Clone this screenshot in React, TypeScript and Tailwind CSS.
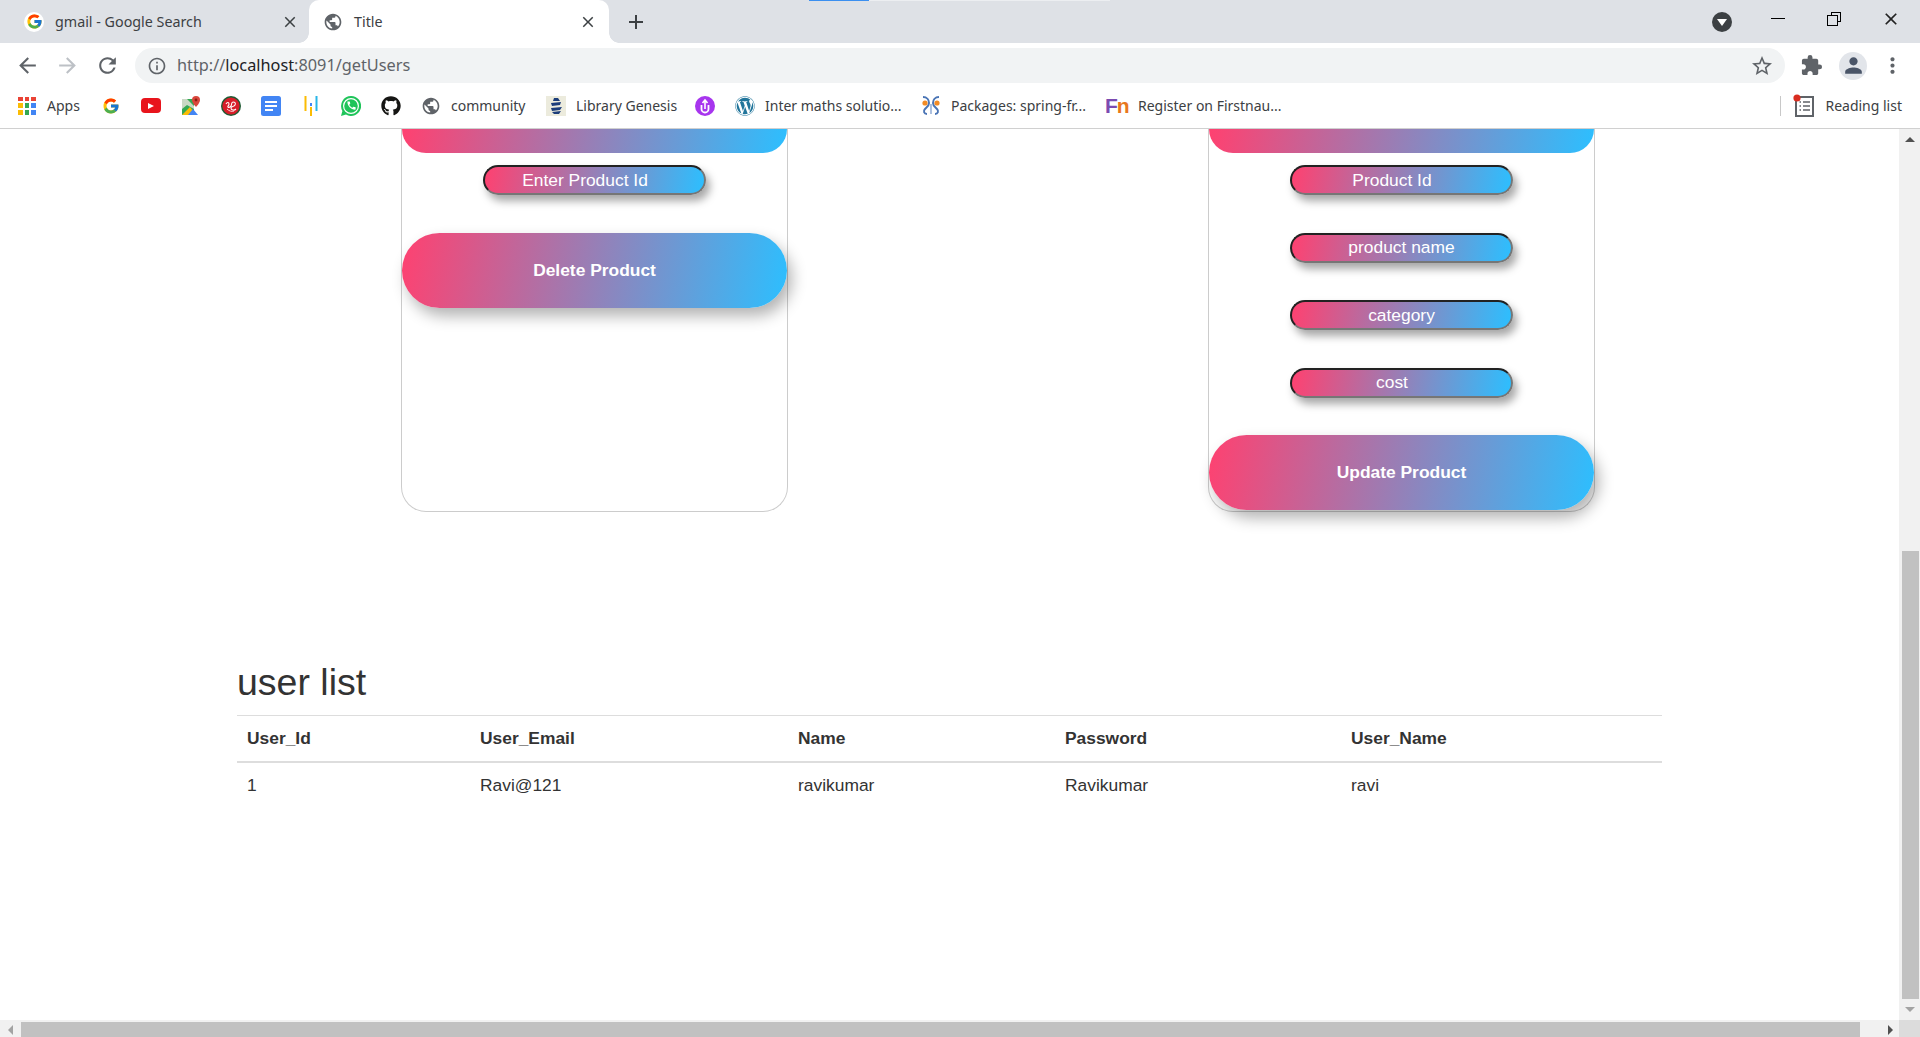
import { FcGoogle } from "react-icons/fc";
import { FaGithub, FaWordpress } from "react-icons/fa";
import {
	MdAdd,
	MdArrowBack,
	MdArrowForward,
	MdCall,
	MdClose,
	MdExtension,
	MdInfoOutline,
	MdMoreVert,
	MdPerson,
	MdPublic,
	MdRefresh,
	MdStarBorder,
} from "react-icons/md";
import type { ReactNode } from "react";

const gradient = "bg-[linear-gradient(100deg,#ff4170,#2cbfff)]";
const chromeFont = "font-['Noto_Sans',sans-serif]";

const tableHeads = [
	{ label: "User_Id", width: "w-[233px]", value: "1" },
	{ label: "User_Email", width: "w-[318px]", value: "Ravi@121" },
	{ label: "Name", width: "w-[267px]", value: "ravikumar" },
	{ label: "Password", width: "w-[286px]", value: "Ravikumar" },
	{ label: "User_Name", width: "w-[321px]", value: "ravi" },
];

function AppsIcon() {
	const colors = ["#ea4335", "#ea4335", "#ea4335", "#fbbc04", "#34a853", "#4285f4", "#fbbc04", "#34a853", "#4285f4"];
	return (
		<div className="grid h-5 w-5 grid-cols-3 gap-[2px] p-[1px]">
			{colors.map((color, i) => (
				<span key={i} style={{ backgroundColor: color }} />
			))}
		</div>
	);
}

function MapsIcon() {
	return (
		<svg viewBox="0 0 20 20" className="h-5 w-5">
			<path d="M1 3 13 3v16H1z" fill="#34a853" />
			<path d="M1 3 6 3 13 10v3L6 9 1 13z" fill="#c9d8c4" />
			<path d="M1 19 9 11l6 8z" fill="#fbbc04" />
			<path d="M7 19 12 13l5 6z" fill="#4285f4" />
			<path d="M15 0a4 4 0 0 1 4 4c0 3-4 7-4 7s-4-4-4-7a4 4 0 0 1 4-4z" fill="#d9473b" />
			<circle cx="15" cy="4" r="1.4" fill="#8c1c13" />
		</svg>
	);
}

function RedIcon() {
	return (
		<svg viewBox="0 0 20 20" className="h-5 w-5">
			<circle cx="10" cy="10" r="10" fill="#1f5a33" />
			<circle cx="10" cy="10" r="8.6" fill="#d81e2a" />
			<path d="M5 8c1-2 3-2 3 0s-2 2-1 3 2 0 3-1 0-4 2-4 3 1 2 3-4 1-4 3 3 3 5 1" fill="none" stroke="#fff" strokeWidth="1.1" />
			<path d="M6 13c2 2 5 3 7 2" fill="none" stroke="#fbd5d5" strokeWidth="1" />
		</svg>
	);
}

function DocsIcon() {
	return (
		<svg viewBox="0 0 20 20" className="h-5 w-5">
			<rect width="20" height="20" rx="2.5" fill="#4285f4" />
			<rect x="4" y="5" width="12" height="2" fill="#fff" />
			<rect x="4" y="9" width="12" height="2" fill="#fff" />
			<rect x="4" y="13" width="8" height="2" fill="#fff" />
		</svg>
	);
}

function BarsIcon() {
	return (
		<svg viewBox="0 0 20 20" className="h-5 w-5">
			<rect x="3.5" y="0" width="2" height="15" fill="#fbbc04" />
			<rect x="9" y="11" width="2" height="9" fill="#fbbc04" />
			<rect x="9" y="7" width="2" height="3" fill="#4285f4" />
			<rect x="14.5" y="0" width="2" height="15" fill="#29b6e8" />
		</svg>
	);
}

function WhatsappIcon() {
	return (
		<div className="relative flex h-5 w-5 items-center justify-center">
			<svg viewBox="0 0 20 20" className="absolute inset-0 h-5 w-5">
				<path d="M10 0a10 10 0 1 1-5 18.6L0 20l1.4-5A10 10 0 0 1 10 0z" fill="#1fc45a" />
				<circle cx="10" cy="10" r="7.4" fill="none" stroke="#fff" strokeWidth="1.2" />
			</svg>
			<MdCall className="relative h-[11px] w-[11px] text-white" />
		</div>
	);
}

function LibraryIcon() {
	return (
		<svg viewBox="0 0 20 20" className="h-5 w-5">
			<rect width="20" height="20" fill="#ecebdd" />
			<path d="M8 2h4l2 3H7z" fill="#1c3d7a" />
			<path d="M5 7l10-1-1 3-8 1z" fill="#1c3d7a" />
			<path d="M5 12l11-1-2 3-8 1z" fill="#1c3d7a" />
			<path d="M6 16l9-1-2 3H8z" fill="#1c3d7a" />
		</svg>
	);
}

function PurpleIcon() {
	return (
		<svg viewBox="0 0 20 20" className="h-5 w-5">
			<circle cx="10" cy="10" r="10" fill="#a735ee" />
			<path d="M6.5 9v4a3.5 3.5 0 0 0 7 0V9" fill="none" stroke="#fff" strokeWidth="1.8" />
			<path d="M10 13V5M7.5 7 10 4l2.5 3" fill="none" stroke="#fff" strokeWidth="1.6" />
		</svg>
	);
}

function SpringIcon() {
	return (
		<svg viewBox="0 0 20 20" className="h-5 w-5">
			<path d="M2 1c4 0 6 3 6 6s-2 4-4 6-1 5 2 5" fill="none" stroke="#4a74b5" strokeWidth="2" />
			<path d="M18 1c-4 0-6 3-6 6s2 4 4 6 1 5-2 5" fill="none" stroke="#4a74b5" strokeWidth="2" />
			<path d="M10 8v10" stroke="#8aa6d2" strokeWidth="1.4" />
			<circle cx="4" cy="7" r="2.6" fill="#f28b25" />
			<circle cx="16" cy="7" r="2.6" fill="#f28b25" />
		</svg>
	);
}

function FnIcon() {
	return (
		<span className="w-5 whitespace-nowrap font-['Liberation_Sans',sans-serif] text-[21px] leading-none font-bold tracking-[-1px]">
			<span className="text-[#7b4bb0]">F</span>
			<span className="text-[#e8771d]">n</span>
		</span>
	);
}

function ReadingIcon() {
	return (
		<svg viewBox="0 0 22 24" className="h-6 w-[22px]">
			<rect x="3" y="3" width="17" height="19" fill="none" stroke="#5f6368" strokeWidth="2" />
			<path d="M6.5 8h1.5M10 8h7M6.5 12h1.5M10 12h7M6.5 16h1.5M10 16h7" stroke="#5f6368" strokeWidth="1.6" />
			<circle cx="4" cy="4" r="3.6" fill="#d92d20" />
		</svg>
	);
}

function Bookmark({ icon, label, width }: { icon: ReactNode; label?: string; width?: string }) {
	return (
		<div className="flex h-6 items-center gap-[10px]">
			<div className="flex h-6 w-5 shrink-0 items-center justify-center">{icon}</div>
			{label && <span className={`${width} whitespace-nowrap`}>{label}</span>}
		</div>
	);
}

function Tab({ icon, title, active }: { icon: ReactNode; title: string; active?: boolean }) {
	return (
		<div
			className={`relative flex h-[43px] items-center rounded-t-[10px] ${
				active ? "w-[300px] bg-white pr-[12px] pl-[14px]" : "w-[309px] pr-[10px] pl-[24px]"
			}`}
		>
			<div className="flex h-5 w-5 items-center justify-center">{icon}</div>
			<span className="ml-[11px] flex-1 text-[14.3px]">{title}</span>
			<MdClose className="h-[18px] w-[18px] text-[#3c4043]" />
			{active && (
				<>
					<div className="absolute bottom-0 -left-[10px] h-[10px] w-[10px] bg-[radial-gradient(circle_at_0_0,#dee1e6_9.5px,#fff_10px)]" />
					<div className="absolute -right-[10px] bottom-0 h-[10px] w-[10px] bg-[radial-gradient(circle_at_100%_0,#dee1e6_9.5px,#fff_10px)]" />
				</>
			)}
		</div>
	);
}

function Pill({ label, shift, margin }: { label: string; shift?: boolean; margin: string }) {
	return (
		<div
			className={`${gradient} ${margin} flex h-[30px] w-[223px] items-center justify-center rounded-[15px] border-2 border-t-[#222] border-r-[#767676] border-b-[#767676] border-l-[#222] text-[17.4px] text-white shadow-[4px_6px_9px_rgba(0,0,0,0.35)] ${
				shift ? "pr-[19px]" : ""
			}`}
		>
			{label}
		</div>
	);
}

function BigButton({ label, margin }: { label: string; margin: string }) {
	return (
		<div
			className={`${gradient} ${margin} flex h-[75px] w-full items-center justify-center rounded-[38px] pb-[1px] text-[17.4px] font-bold text-white shadow-[5px_8px_15px_rgba(0,0,0,0.3)]`}
		>
			{label}
		</div>
	);
}

function Card({ children }: { children: ReactNode }) {
	return (
		<div className="flex h-[383px] w-[387px] flex-col items-center rounded-b-[25px] border-x border-b border-[#ccc]">
			<div className={`${gradient} h-[24px] w-full rounded-b-[26px]`} />
			{children}
		</div>
	);
}

export default function App() {
	return (
		<div className="relative flex h-screen flex-col overflow-hidden bg-white font-['Liberation_Sans',sans-serif] text-[#333]">
			<div className="absolute top-0 left-[809px] z-10 flex h-[1px] w-[301px]">
				<div className="w-[60px] bg-[#3b8ff0]" />
				<div className="flex-1 bg-[#eceef1]" />
			</div>

			{/* tab strip */}
			<div className={`${chromeFont} flex h-[43px] shrink-0 items-center bg-[#dee1e6] text-[#3c4043]`}>
				<Tab
					title="gmail - Google Search"
					icon={
						<div className="flex h-5 w-5 items-center justify-center rounded-full bg-white">
							<FcGoogle className="h-[17px] w-[17px]" />
						</div>
					}
				/>
				<Tab title="Title" active icon={<MdPublic className="h-[22px] w-[22px] text-[#5f6368]" />} />
				<MdAdd className="ml-[15px] h-[24px] w-[24px] text-[#3c4043]" />
				<div className="ml-auto flex h-full items-center">
					<div className="flex h-[20px] w-[20px] items-center justify-center rounded-full bg-[#3c4043]">
						<div className="mt-[2px] h-0 w-0 border-x-[5px] border-t-[7px] border-x-transparent border-t-white" />
					</div>
					<div className="ml-[39px] h-[1px] w-[14px] -translate-y-[3px] bg-black" />
					<div className="relative ml-[42px] h-[14px] w-[14px] -translate-y-[3px]">
						<div className="absolute top-0 right-0 h-[10px] w-[10px] border border-black" />
						<div className="absolute bottom-0 left-0 h-[11px] w-[11px] border border-black bg-[#dee1e6]" />
					</div>
					<MdClose className="mr-[19px] ml-[40px] h-[20px] w-[20px] -translate-y-[3px] text-[#222]" />
				</div>
			</div>

			{/* address bar */}
			<div className={`${chromeFont} flex h-[45px] shrink-0 items-start bg-white pt-[5px]`}>
				<div className="flex h-[35px] w-[135px] items-center pl-[15px] text-[#5f6368]">
					<MdArrowBack className="h-[25px] w-[25px]" />
					<MdArrowForward className="ml-[15px] h-[25px] w-[25px] text-[#bdc1c6]" />
					<MdRefresh className="ml-[15px] h-[25px] w-[25px]" />
				</div>
				<div className="flex h-[35px] w-[1650px] items-center rounded-full bg-[#f1f3f4] pl-[12px] text-[#5f6368]">
					<MdInfoOutline className="h-[20px] w-[20px]" />
					<span className="ml-[10px] text-[16.3px]">
						http://<span className="text-[#202124]">localhost</span>:8091/getUsers
					</span>
					<MdStarBorder className="mr-[11px] ml-auto h-[24px] w-[24px]" />
				</div>
				<div className="flex h-[35px] flex-1 items-center text-[#5f6368]">
					<MdExtension className="ml-[15px] h-[23px] w-[23px]" />
					<div className="ml-[16px] flex h-[28px] w-[28px] items-center justify-center rounded-full bg-[#e2e5ea]">
						<MdPerson className="h-[25px] w-[25px] text-[#4a5568]" />
					</div>
					<MdMoreVert className="ml-[13px] h-[25px] w-[25px]" />
				</div>
			</div>

			{/* bookmarks */}
			<div
				className={`${chromeFont} flex h-[41px] shrink-0 items-center gap-[20px] border-b border-[#d0d0d0] bg-white pb-[5px] pl-[17px] text-[14px] text-[#3c4043]`}
			>
				<Bookmark icon={<AppsIcon />} label="Apps" width="w-[34px]" />
				<Bookmark icon={<FcGoogle className="h-[18px] w-[18px]" />} />
				<Bookmark
					icon={
						<div className="flex h-[15px] w-5 items-center justify-center rounded-[4px] bg-[#e8141c]">
							<div className="h-0 w-0 border-y-[3.5px] border-l-[6px] border-y-transparent border-l-white" />
						</div>
					}
				/>
				<Bookmark icon={<MapsIcon />} />
				<Bookmark icon={<RedIcon />} />
				<Bookmark icon={<DocsIcon />} />
				<Bookmark icon={<BarsIcon />} />
				<Bookmark icon={<WhatsappIcon />} />
				<Bookmark icon={<FaGithub className="h-[20px] w-[20px] text-[#161614]" />} />
				<Bookmark icon={<MdPublic className="h-[22px] w-[22px] text-[#5f6368]" />} label="community" width="w-[75px]" />
				<Bookmark icon={<LibraryIcon />} label="Library Genesis" width="w-[99px]" />
				<Bookmark icon={<PurpleIcon />} />
				<Bookmark icon={<FaWordpress className="h-[20px] w-[20px] text-[#21759b]" />} label="Inter maths solutio..." width="w-[136px]" />
				<Bookmark icon={<SpringIcon />} label="Packages: spring-fr..." width="w-[134px]" />
				<Bookmark icon={<FnIcon />} label="Register on Firstnau..." width="ml-[3px] w-[142px]" />
				<div className="mr-[18px] ml-auto flex items-center">
					<div className="mr-[12px] h-[20px] w-[1px] bg-[#c8c8c8]" />
					<ReadingIcon />
					<span className="ml-[10px]">Reading list</span>
				</div>
			</div>

			{/* page */}
			<div className="flex min-h-0 flex-1">
				<div className="min-w-0 flex-1 overflow-hidden">
					<div className="ml-[401px] flex w-[1194px] justify-between">
						<Card>
							<Pill label="Enter Product Id" shift margin="mt-[12px]" />
							<BigButton label="Delete Product" margin="mt-[38px]" />
						</Card>
						<Card>
							<Pill label="Product Id" shift margin="mt-[12px]" />
							<Pill label="product name" margin="mt-[38px] pb-[2px]" />
							<Pill label="category" margin="mt-[37px]" />
							<Pill label="cost" shift margin="mt-[38px] pb-[2px]" />
							<BigButton label="Update Product" margin="mt-[37px]" />
						</Card>
					</div>

					<div className="mt-[150px] ml-[237px] w-[1425px]">
						<h1 className="mb-[13px] text-[37.5px] leading-[40px]">user list</h1>
						<table className="w-full table-fixed text-left text-[17.4px]">
							<thead>
								<tr className="h-[46px] border-t border-b-2 border-t-[#ddd] border-b-[#ddd]">
									{tableHeads.map((col) => (
										<th key={col.label} className={`${col.width} pl-[10px] font-bold`}>
											{col.label}
										</th>
									))}
								</tr>
							</thead>
							<tbody>
								<tr className="h-[46px]">
									{tableHeads.map((col) => (
										<td key={col.label} className="pl-[10px]">
											{col.value}
										</td>
									))}
								</tr>
							</tbody>
						</table>
					</div>
				</div>

				{/* vertical scrollbar */}
				<div className="flex w-[21px] shrink-0 flex-col items-center bg-[#f1f1f1] pl-[1px]">
					<div className="flex h-[21px] items-center">
						<div className="h-0 w-0 border-x-[5px] border-b-[5px] border-x-transparent border-b-[#505050]" />
					</div>
					<div className="mt-[401px] h-[448px] w-[17px] bg-[#c1c1c1]" />
					<div className="flex flex-1 items-center">
						<div className="h-0 w-0 border-x-[5px] border-t-[5px] border-x-transparent border-t-[#a3a3a3]" />
					</div>
				</div>
			</div>

			{/* horizontal scrollbar */}
			<div className="flex h-[17px] shrink-0 bg-[#f1f1f1]">
				<div className="flex w-[21px] items-center justify-center pt-[2px]">
					<div className="h-0 w-0 border-y-[5px] border-r-[5px] border-y-transparent border-r-[#a3a3a3]" />
				</div>
				<div className="mt-[2px] w-[1839px] bg-[#c1c1c1]" />
				<div className="flex flex-1 items-center justify-end pt-[2px] pr-[6px]">
					<div className="h-0 w-0 border-y-[5px] border-l-[5px] border-y-transparent border-l-[#505050]" />
				</div>
				<div className="w-[21px] bg-[#dcdcdc]" />
			</div>
		</div>
	);
}
